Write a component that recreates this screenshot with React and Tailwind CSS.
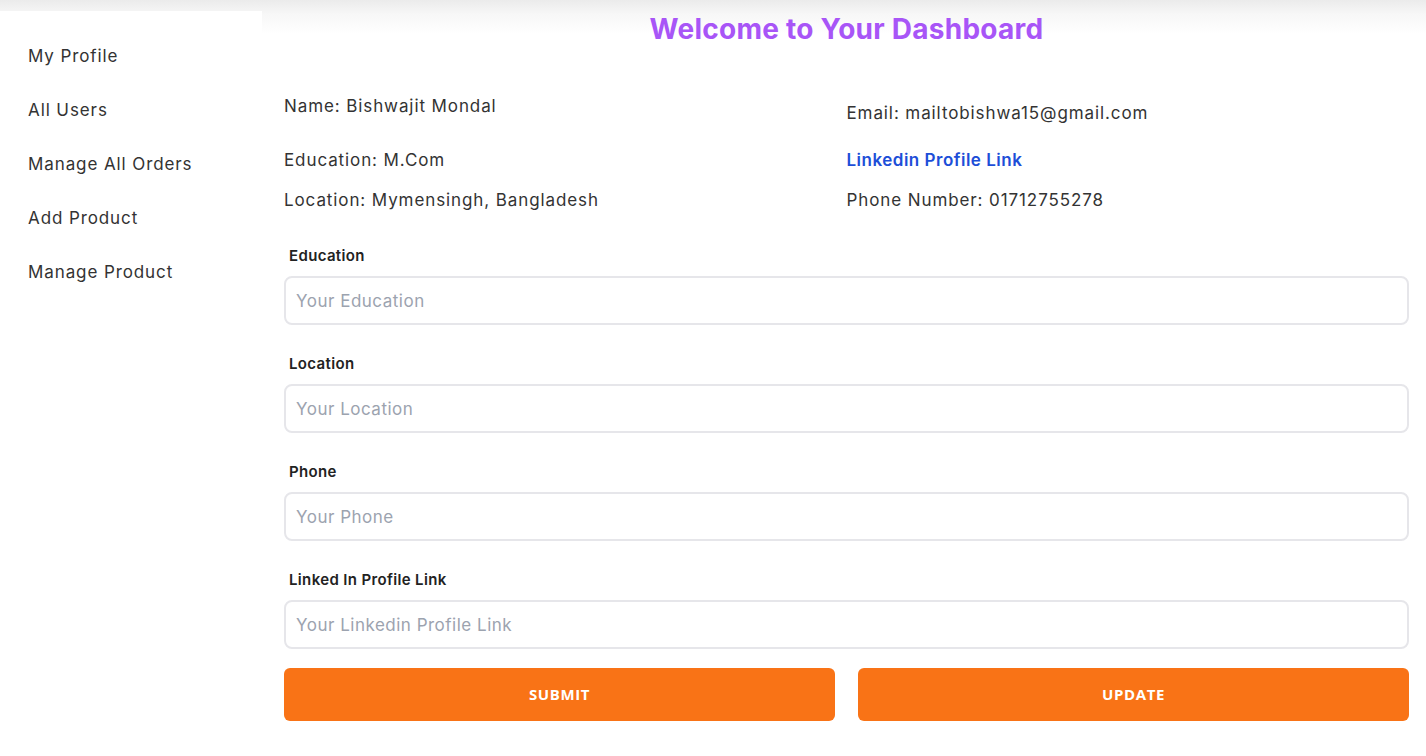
import React from "react";

const font = { fontFamily: "Inter, 'Open Sans', sans-serif" };

function Field({ label, placeholder }) {
  return (
    <div className="flex flex-col">
      <label className="pl-[5px] h-[22px] flex items-center text-[15px] font-semibold tracking-[0.35px] text-[#222]">{label}</label>
      <input
        placeholder={placeholder}
        className="mt-[9px] h-[49px] w-full rounded-lg border-2 border-[#e6e6ea] bg-white px-[10px] text-[17px] tracking-[0.5px] text-[#333] placeholder:text-[#9ca3af] outline-none"
      />
    </div>
  );
}

export default function App() {
  return (
    <div
      className="min-h-[756px] w-full bg-[linear-gradient(to_bottom,#ebebeb_0px,#f7f7f7_14px,#ffffff_34px)] text-[#333]"
      style={font}
    >
      <div className="flex items-start">
        <aside className="mt-[11px] w-[262px] shrink-0 bg-white pt-[35px] pl-[28px]">
          <nav className="flex flex-col gap-[32px] text-[17px] tracking-[0.9px] text-[#333]">
            <a className="h-[22px] flex items-center">My Profile</a>
            <a className="h-[22px] flex items-center">All Users</a>
            <a className="h-[22px] flex items-center">Manage All Orders</a>
            <a className="h-[22px] flex items-center">Add Product</a>
            <a className="h-[22px] flex items-center">Manage Product</a>
          </nav>
        </aside>
        <main className="flex-1 pl-[22px] pr-[17px]">
          <h1 className="mt-[11px] h-[36px] flex items-center justify-center text-[28px] font-bold tracking-[0.25px] text-[#a855f7]">
            Welcome to Your Dashboard
          </h1>
          <div className="mt-[49px] grid grid-cols-2 text-[17px] tracking-[0.9px] text-[#333]">
            <div className="flex flex-col">
              <p className="h-[22px] flex items-center">Name: Bishwajit Mondal</p>
              <p className="mt-[32px] h-[22px] flex items-center">Education: M.Com</p>
              <p className="mt-[18px] h-[22px] flex items-center">Location: Mymensingh, Bangladesh</p>
            </div>
            <div className="flex flex-col">
              <p className="mt-[7px] h-[22px] flex items-center">Email: mailtobishwa15@gmail.com</p>
              <a className="mt-[25px] h-[22px] flex items-center font-semibold tracking-[0.5px] text-[#1d4ed8]">Linkedin Profile Link</a>
              <p className="mt-[18px] h-[22px] flex items-center">Phone Number: 01712755278</p>
            </div>
          </div>
          <div className="mt-[33px] flex flex-col gap-[28px]">
            <Field label="Education" placeholder="Your Education" />
            <Field label="Location" placeholder="Your Location" />
            <Field label="Phone" placeholder="Your Phone" />
            <Field label="Linked In Profile Link" placeholder="Your Linkedin Profile Link" />
          </div>
          <div className="mt-[19px] grid grid-cols-2 gap-[23px]">
            <button className="h-[53px] rounded-md bg-[#f97316] text-[15px] font-bold uppercase tracking-[0.6px] text-white" style={{ fontFamily: "'Open Sans', sans-serif" }}>
              Submit
            </button>
            <button className="h-[53px] rounded-md bg-[#f97316] text-[15px] font-bold uppercase tracking-[0.6px] text-white" style={{ fontFamily: "'Open Sans', sans-serif" }}>
              Update
            </button>
          </div>
        </main>
      </div>
    </div>
  );
}
